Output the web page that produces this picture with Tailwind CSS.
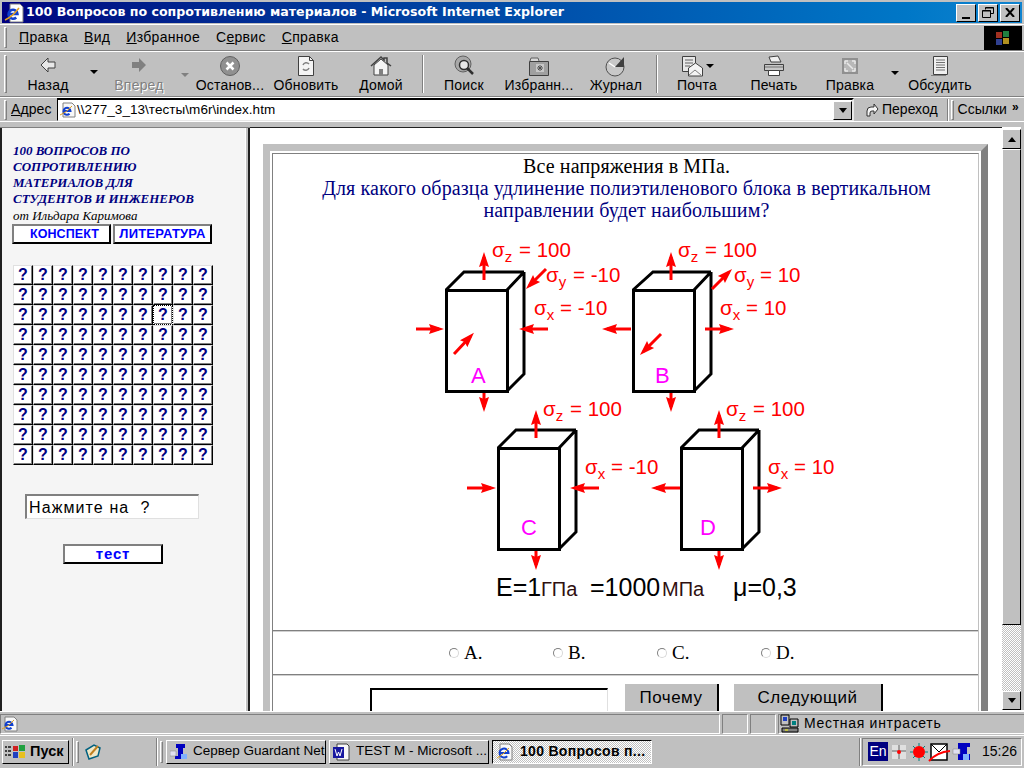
<!DOCTYPE html>
<html lang="ru">
<head>
<meta charset="UTF-8">
<title>100 Вопросов по сопротивлению материалов</title>
<script src="https://cdn.jsdelivr.net/npm/@tailwindcss/browser@4"></script>
</head>
<body class="w-[1024px] h-[768px] overflow-hidden bg-[#c0c0c0] font-['Liberation_Sans',sans-serif] text-[14px] text-black">

<!-- title bar -->
<div class="h-[24px] pt-[2px] pb-[1px] px-[2px] bg-[#c0c0c0]">
  <div class="h-[21px] flex items-center bg-gradient-to-r from-[#000080] to-[#1084d0] pl-[2px] pr-[2px]">
    <svg width="20" height="20" viewBox="0 0 20 20" class="shrink-0"><path d="M6 1h10l3 3v15H6z" fill="#fff" stroke="#808080"/><path d="M4.500 11h9a4.500 4.500 0 1 0-1.300 3.500" fill="none" stroke="#1040d0" stroke-width="2.500"/><path d="M1 17Q8 14 15 5" fill="none" stroke="#e0a020" stroke-width="1.500"/></svg>
    <span class="ml-[2px] font-['DejaVu_Sans',sans-serif] font-bold text-[12.6px] text-white whitespace-nowrap">100 Вопросов по сопротивлению материалов - Microsoft Internet Explorer</span>
    <div class="ml-auto flex">
      <span class="w-[20px] h-[18px] bg-[#c0c0c0] border-t border-l border-white border-r border-b border-r-black border-b-black flex items-end justify-center pb-[2px]"><span class="w-[8px] h-[2px] bg-black"></span></span>
      <span class="ml-[2px] w-[20px] h-[18px] bg-[#c0c0c0] border border-white border-r-black border-b-black flex items-center justify-center"><svg width="12" height="11" viewBox="0 0 12 11"><path d="M3.500 2.500V.5h8v6h-3M.5 3.500h8v7h-8zM.5 4h8M3.500 1h8" fill="none" stroke="#000"/></svg></span>
      <span class="ml-[2px] w-[20px] h-[18px] bg-[#c0c0c0] border border-white border-r-black border-b-black flex items-center justify-center"><svg width="10" height="9" viewBox="0 0 10 9"><path d="M1 0l8 9M9 0L1 9" stroke="#000" stroke-width="2"/></svg></span>
    </div>
  </div>
</div>

<!-- menu bar -->
<div class="h-[27px] flex items-center border-t border-b border-t-white border-b-[#808080] relative">
  <span class="ml-[4px] w-[3px] h-[21px] border border-white border-r-[#808080] border-b-[#808080]"></span>
  <div class="ml-[12px] flex gap-[16px] tracking-[0.3px]">
    <span><u>П</u>равка</span><span><u>В</u>ид</span><span><u>И</u>збранное</span><span>С<u>е</u>рвис</span><span><u>С</u>правка</span>
  </div>
  <div class="absolute right-[2px] top-[1px] w-[38px] h-[24px] bg-black flex items-center justify-center">
    <svg width="16" height="16" viewBox="0 0 16 16"><path d="M1 2h6v6H1z" fill="#a03020"/><path d="M8 1h6v6H8z" fill="#208040"/><path d="M1 9h6v6H1z" fill="#304090"/><path d="M8 8h6v6H8z" fill="#b09020"/></svg>
  </div>
</div>

<!-- toolbar -->
<div class="h-[46px] flex items-center border-t border-b border-t-white border-b-[#808080] tracking-[0.2px]">
  <span class="ml-[4px] mr-[6px] w-[3px] h-[38px] border border-white border-r-[#808080] border-b-[#808080] shrink-0"></span>
  <div class="w-[68px] flex flex-col items-center relative left-[1px]">
    <svg width="20" height="20" viewBox="0 0 20 20"><path d="M3 10l7-7v4h7v6h-7v4z" fill="#e8e8e8" stroke="#404040"/></svg>
    <span class="mt-[2px] leading-[16px] whitespace-nowrap">Назад</span>
  </div>
  <div class="w-[26px] flex justify-center -mt-[5px]"><span class="border-x-[4px] border-x-transparent border-t-[4px] border-t-black"></span></div>
  <div class="w-[64px] flex flex-col items-center text-[#808080]">
    <svg width="20" height="20" viewBox="0 0 20 20"><path d="M17 10l-7-7v4H3v6h7v4z" fill="#808080"/></svg>
    <span class="mt-[2px] leading-[16px] whitespace-nowrap [text-shadow:1px_1px_0_#fff]">Вперед</span>
  </div>
  <div class="w-0 relative left-[10px]"><span class="absolute -top-[1px] border-x-[4px] border-x-transparent border-t-[4px] border-t-[#808080]"></span></div>
  <div class="w-[25px]"></div>
  <div class="w-[68px] flex flex-col items-center">
    <svg width="22" height="22" viewBox="0 0 22 22"><circle cx="11" cy="11" r="9.500" fill="#909090" stroke="#606060"/><path d="M7.500 7.500l7 7M14.500 7.500l-7 7" stroke="#fff" stroke-width="2.500"/></svg>
    <span class="leading-[16px] whitespace-nowrap">Останов...</span>
  </div>
  <div class="w-[84px] flex flex-col items-center">
    <svg width="20" height="22" viewBox="0 0 20 22"><path d="M2.500 1.500h11l4 4v15h-15z" fill="#f4f4f4" stroke="#404040"/><path d="M13.500 1.500v4h4" fill="none" stroke="#404040"/><path d="M7 10a3.500 3.500 0 0 1 6-1M13 13a3.500 3.500 0 0 1-6 1" fill="none" stroke="#808080" stroke-width="1.500"/></svg>
    <span class="leading-[16px] whitespace-nowrap">Обновить</span>
  </div>
  <div class="w-[66px] flex flex-col items-center">
    <svg width="22" height="22" viewBox="0 0 22 22"><path d="M1 11L11 2l3 3V3h3v5l4 3" fill="none" stroke="#404040" stroke-width="1.500"/><path d="M4 10v10h14V10l-7-6z" fill="#f4f4f4" stroke="#404040"/><path d="M9 14h4v6H9z" fill="#808080"/></svg>
    <span class="leading-[16px] whitespace-nowrap">Домой</span>
  </div>
  <div class="w-[18px] flex justify-center"><span class="w-[2px] h-[38px] border-l border-l-[#808080] border-r border-r-white"></span></div>
  <div class="w-[64px] flex flex-col items-center">
    <svg width="22" height="22" viewBox="0 0 22 22"><circle cx="10" cy="9" r="8" fill="#a8a8a8" stroke="#606060"/><circle cx="11" cy="10" r="4.500" fill="#e8e8e8" stroke="#303030" stroke-width="1.500"/><path d="M14 13l6 6" stroke="#303030" stroke-width="2.500"/></svg>
    <span class="leading-[16px] whitespace-nowrap">Поиск</span>
  </div>
  <div class="w-[86px] flex flex-col items-center">
    <svg width="22" height="22" viewBox="0 0 22 22"><path d="M1.500 6.500h19v14h-19z" fill="#a0a0a0" stroke="#404040"/><path d="M2 6l1-3h7l1 3" fill="#d8d8d8" stroke="#606060"/><path d="M8 9h8v8H8z" fill="#c8c8c8"/><path d="M12 10v6M9 13h6M10 11l4 4M14 11l-4 4" stroke="#505050"/></svg>
    <span class="leading-[16px] whitespace-nowrap">Избранн...</span>
  </div>
  <div class="w-[68px] flex flex-col items-center">
    <svg width="22" height="22" viewBox="0 0 22 22"><circle cx="10" cy="12" r="9" fill="#c8c8c8" stroke="#505050"/><path d="M10 12L19 2v10z" fill="#404040"/><path d="M10 12L4 8" stroke="#fff" stroke-width="1.500"/></svg>
    <span class="leading-[16px] whitespace-nowrap">Журнал</span>
  </div>
  <div class="w-[14px] flex justify-center"><span class="w-[2px] h-[38px] border-l border-l-[#808080] border-r border-r-white"></span></div>
  <div class="w-[66px] flex flex-col items-center relative">
    <svg width="22" height="22" viewBox="0 0 22 22" class="-ml-[10px]"><path d="M1.500 1.500h13v15h-13z" fill="#e8e8e8" stroke="#404040"/><path d="M4 5h8M4 8h8M4 11h5" stroke="#606060"/><path d="M7.500 13l7-5 7 5v8h-14z" fill="#f4f4f4" stroke="#404040"/><path d="M8 20l6-5 6 5" fill="none" stroke="#808080"/></svg>
    <span class="absolute left-[42px] top-[9px] border-x-[4px] border-x-transparent border-t-[4px] border-t-black"></span>
    <span class="leading-[16px] whitespace-nowrap">Почта</span>
  </div>
  <div class="w-[88px] flex flex-col items-center">
    <svg width="22" height="22" viewBox="0 0 22 22"><path d="M6 2l9-1 3 6H8z" fill="#f0f0f0" stroke="#404040"/><path d="M1.500 9.500h19v6h-19z" fill="#c8c8c8" stroke="#404040"/><path d="M5.500 15.500h11v5h-11z" fill="#fff" stroke="#404040"/><path d="M2 12h18" stroke="#707070"/></svg>
    <span class="leading-[16px] whitespace-nowrap">Печать</span>
  </div>
  <div class="w-[64px] flex flex-col items-center">
    <svg width="22" height="22" viewBox="0 0 22 22"><path d="M3 3h16v16H3z" fill="#909090"/><path d="M5 5h12v12H5z" fill="#b8b8b8"/><path d="M6 6h3M6 6v3M16 6h-3M16 6v3M6 16h3M6 16v-3M16 16h-3M16 16v-3M8 8l6 6" stroke="#e8e8e8" stroke-width="1.500"/></svg>
    <span class="leading-[16px] whitespace-nowrap">Правка</span>
  </div>
  <div class="w-[26px] flex justify-center -mt-[3px]"><span class="border-x-[4px] border-x-transparent border-t-[4px] border-t-black"></span></div>
  <div class="w-[64px] flex flex-col items-center">
    <svg width="20" height="22" viewBox="0 0 20 22"><path d="M3.500 1.500h14v18h-14z" fill="#f0f0f0" stroke="#404040"/><path d="M6 5h9M6 7.500h9M6 10h9M6 12.500h9M6 15h9" stroke="#707070"/><path d="M1 20.500h15" stroke="#808080"/></svg>
    <span class="leading-[16px] whitespace-nowrap">Обсудить</span>
  </div>
</div>

<!-- address bar -->
<div class="h-[24px] flex items-center border-t border-t-white">
  <span class="ml-[4px] w-[3px] h-[20px] border border-white border-r-[#808080] border-b-[#808080] shrink-0"></span>
  <span class="ml-[4px] w-[46px] tracking-[0.1px]"><u>А</u>дрес</span>
  <div class="w-[797px] h-[23px] bg-white border-t-2 border-l border-r-2 border-b border-t-black border-l-black border-r-[#e8e8e8] border-b-[#e8e8e8] flex items-center">
    <svg width="16" height="16" viewBox="0 0 16 16" class="ml-[2px] shrink-0"><path d="M3 1h9l3 3v11H3z" fill="#f8f8f8" stroke="#808080"/><path d="M3.500 9h7a3.500 3.500 0 1 0-1 2.800" fill="none" stroke="#1040d0" stroke-width="2"/><path d="M0 13Q6 11 12 4" fill="none" stroke="#e0a020"/></svg>
    <span class="ml-[1px] text-[13.5px] tracking-[0.05px] whitespace-nowrap">\\277_3_13\тесты\m6r\index.htm</span>
    <span class="ml-auto w-[19px] h-[19px] bg-[#c0c0c0] border border-white border-r-black border-b-black flex items-center justify-center"><span class="border-x-[4.500px] border-x-transparent border-t-[5px] border-t-black"></span></span>
  </div>
  <svg width="14" height="16" viewBox="0 0 14 16" class="ml-[11px] shrink-0"><path d="M2 14V9a4 4 0 0 1 4-4h3V2l4 5-4 5V9H7a2 2 0 0 0-2 2v3z" fill="#f4f4f4" stroke="#303030"/></svg>
  <span class="ml-[3px]">Переход</span>
  <span class="ml-[9px] w-[2px] h-[22px] border-l border-l-[#808080] border-r border-r-white"></span>
  <span class="ml-[2px] w-[3px] h-[20px] border border-white border-r-[#808080] border-b-[#808080]"></span>
  <span class="ml-[4px]">Ссылки</span>
  <span class="ml-[5px] -mt-[6px] text-[12px] font-bold">»</span>
</div>

<!-- content -->
<div class="h-[590px] flex border-t border-t-white pt-[5px]">
  <div class="w-[250px] h-full flex border-t border-t-[#808080]">
    <!-- left frame -->
    <div class="w-[245px] h-full bg-[#f5f5f5] border-l-2 border-l-[#202020] pl-[11px] pt-[15px] relative font-['Liberation_Serif',serif]">
      <div class="text-[13px] leading-[16px] font-bold italic text-[#000080]">100 ВОПРОСОВ ПО<br>СОПРОТИВЛЕНИЮ<br>МАТЕРИАЛОВ ДЛЯ<br>СТУДЕНТОВ И ИНЖЕНЕРОВ</div>
      <div class="text-[13px] leading-[16px] italic mt-[1px]">от Ильдара Каримова</div>
      <div class="flex gap-[2px] -ml-[1px] font-['Liberation_Sans',sans-serif] text-[13px] tracking-[0.2px] font-bold text-[#0000ff]">
        <span class="w-[99px] h-[20px] bg-white border-2 border-[#808080] border-r-black border-b-black flex items-center justify-center pl-[6px] text-[12.5px] tracking-[0.1px]">КОНСПЕКТ</span>
        <span class="w-[99px] h-[20px] bg-white border-2 border-[#808080] border-r-black border-b-black flex items-center justify-center">ЛИТЕРАТУРА</span>
      </div>
      <div id="quizGrid" class="mt-[21px] grid grid-cols-[repeat(10,20px)] auto-rows-[20px] font-['Liberation_Sans',sans-serif]"></div>
      <div class="mt-[29px] ml-[12px] w-[174px] h-[25px] bg-white border-t-2 border-l-2 border-t-[#808080] border-l-[#808080] border-r border-b border-r-[#e0e0e0] border-b-[#e0e0e0] pl-[2px] pt-[1px] flex items-center font-['Liberation_Sans',sans-serif] text-[16px] tracking-[1.1px] whitespace-pre">Нажмите на  ?</div>
      <div class="mt-[25px] ml-[50px] w-[100px] h-[20px] bg-white border-2 border-[#808080] border-r-black border-b-black flex items-center justify-center font-['Liberation_Sans',sans-serif] text-[15px] tracking-[0.8px] font-bold text-[#0000ff]">тест</div>
    </div>
    <div class="w-[3px] h-full bg-[#c0c0c0] border-l border-l-white"></div>
    <div class="w-[2px] h-full bg-[#202020]"></div>
  </div>

  <!-- right frame -->
  <div class="w-[752px] h-full bg-white border-t border-t-[#202020] pl-[13px] pt-[16px] overflow-hidden">
    <div class="w-[725px] border-[7px] border-[#c0c0c0] border-r-[#808080] border-b-0 bg-white">
      <div class="border-[2px] border-white border-b-0">
        <div class="border-t border-l border-r border-[#808080] border-r-[#c0c0c0] h-[570px] font-['Liberation_Serif',serif] relative">
          <div class="text-center text-[20px] tracking-[0.14px] leading-[22px] pt-[1px] pl-[2px] text-[#000080]">
            <div class="text-black">Все напряжения в МПа.</div>
            <div>Для какого образца удлинение полиэтиленового блока в вертикальном<br>направлении будет наибольшим?</div>
          </div>
          <!-- diagram: 1:1 with page, origin shifted by (273,154) -->
          <svg class="absolute left-0 top-0 font-['Liberation_Sans',sans-serif]" width="705" height="480" viewBox="273 154 705 480">
            <defs>
              <marker id="head" markerUnits="userSpaceOnUse" markerWidth="16" markerHeight="14" refX="10" refY="7" orient="auto"><path d="M0 2L15 7 0 12 2 7z" fill="#f00"/></marker>
            </defs>
            <g fill="none" stroke="#000" stroke-width="3" shape-rendering="crispEdges">
              <path d="M446 290h61v101h-61z"/><path d="M446 290l18-18h60M524 272v102l-17 17M507 290l17-18" shape-rendering="auto"/>
              <path d="M633 290h61v101h-61z"/><path d="M633 290l20-18h58M711 272v102l-17 17M694 290l17-18" shape-rendering="auto"/>
              <path d="M498 448h61v101h-61z"/><path d="M498 448l18-18h60M576 430v102l-17 17M559 448l17-18" shape-rendering="auto"/>
              <path d="M681 448h61v101h-61z"/><path d="M681 448l18-18h60M759 430v102l-17 17M742 448l17-18" shape-rendering="auto"/>
            </g>
            <g stroke="#f00" stroke-width="3" fill="none">
              <path marker-end="url(#head)" d="M484 280V257"/><path marker-end="url(#head)" d="M546 269L529.500 285.500"/><path marker-end="url(#head)" d="M416 329H439"/><path marker-end="url(#head)" d="M548 329H524"/><path marker-end="url(#head)" d="M454 354L470.500 336.500"/><path marker-end="url(#head)" d="M484 393V407"/>
              <path marker-end="url(#head)" d="M671 280V257"/><path marker-end="url(#head)" d="M712 289L728.500 272.500"/><path marker-end="url(#head)" d="M631 329H607"/><path marker-end="url(#head)" d="M705 329H729"/><path marker-end="url(#head)" d="M661 334L643.500 351.500"/><path marker-end="url(#head)" d="M671 393V407"/>
              <path marker-end="url(#head)" d="M536 438V415"/><path marker-end="url(#head)" d="M467 488H491"/><path marker-end="url(#head)" d="M599 488H575"/><path marker-end="url(#head)" d="M536 551V565"/>
              <path marker-end="url(#head)" d="M719 438V415"/><path marker-end="url(#head)" d="M680 488H656"/><path marker-end="url(#head)" d="M753 488H777"/><path marker-end="url(#head)" d="M719 551V565"/>
            </g>
            <g fill="#f00" font-size="20.500">
              <text x="492" y="257">σ<tspan dy="5" font-size="15">z</tspan><tspan x="519" dy="-5">= 100</tspan></text>
              <text x="546" y="282">σ<tspan dy="5" font-size="15">y</tspan><tspan x="573" dy="-5">= -10</tspan></text>
              <text x="534" y="315">σ<tspan dy="5" font-size="15">x</tspan><tspan x="560" dy="-5">= -10</tspan></text>
              <text x="678" y="257">σ<tspan dy="5" font-size="15">z</tspan><tspan x="705" dy="-5">= 100</tspan></text>
              <text x="734" y="282">σ<tspan dy="5" font-size="15">y</tspan><tspan x="760" dy="-5">= 10</tspan></text>
              <text x="720" y="315">σ<tspan dy="5" font-size="15">x</tspan><tspan x="746" dy="-5">= 10</tspan></text>
              <text x="543" y="416">σ<tspan dy="5" font-size="15">z</tspan><tspan x="570" dy="-5">= 100</tspan></text>
              <text x="585" y="474">σ<tspan dy="5" font-size="15">x</tspan><tspan x="611" dy="-5">= -10</tspan></text>
              <text x="726" y="416">σ<tspan dy="5" font-size="15">z</tspan><tspan x="753" dy="-5">= 100</tspan></text>
              <text x="768" y="474">σ<tspan dy="5" font-size="15">x</tspan><tspan x="794" dy="-5">= 10</tspan></text>
            </g>
            <g fill="#f0f" font-size="22">
              <text x="471" y="383">A</text><text x="655" y="383">B</text><text x="521" y="535">C</text><text x="700" y="535">D</text>
            </g>
            <g font-size="25" fill="#000">
              <text x="496" y="596">E=1</text><text x="541" y="596" font-size="20" fill="#301010">ГПа</text>
              <text x="590" y="596">=1000</text><text x="662" y="596" font-size="20" fill="#301010">МПа</text>
              <text x="733" y="596">μ=0,3</text>
            </g>
          </svg>
          <div class="absolute left-0 top-[476px] w-full h-[2px] bg-[#808080] border-b border-b-[#d0d0d0]"></div>
          <div class="absolute left-[176px] top-[489px] flex text-[19px] leading-[20px]">
            <label class="w-[104px] flex items-center"><span class="w-[10px] h-[10px] rounded-full bg-white border border-[#808080] border-r-[#d8d8d8] border-b-[#d8d8d8] mr-[5px]"></span>A.</label>
            <label class="w-[104px] flex items-center"><span class="w-[10px] h-[10px] rounded-full bg-white border border-[#808080] border-r-[#d8d8d8] border-b-[#d8d8d8] mr-[5px]"></span>B.</label>
            <label class="w-[104px] flex items-center"><span class="w-[10px] h-[10px] rounded-full bg-white border border-[#808080] border-r-[#d8d8d8] border-b-[#d8d8d8] mr-[5px]"></span>C.</label>
            <label class="flex items-center"><span class="w-[10px] h-[10px] rounded-full bg-white border border-[#808080] border-r-[#d8d8d8] border-b-[#d8d8d8] mr-[5px]"></span>D.</label>
          </div>
          <div class="absolute left-0 top-[520px] w-full h-[2px] bg-[#808080] border-b border-b-[#d0d0d0]"></div>
          <div class="absolute left-[97px] top-[530px] flex items-start font-['Liberation_Sans',sans-serif] text-[17px] tracking-[0.5px]">
            <span class="mt-[4px] w-[238px] h-[30px] bg-white border-t-2 border-l-2 border-t-black border-l-black border-r border-r-[#e0e0e0]"></span>
            <span class="ml-[17px] w-[94px] h-[34px] bg-[#c0c0c0] border-r-2 border-r-black pt-[1px] text-center">Почему</span>
            <span class="ml-[15px] w-[149px] h-[34px] bg-[#c0c0c0] border-r-2 border-r-black pt-[1px] text-center">Следующий</span>
          </div>
        </div>
      </div>
    </div>
  </div>

  <!-- scrollbar -->
  <div class="w-[19px] h-full bg-white pt-[2px]">
    <div class="h-[581px] flex flex-col bg-[repeating-conic-gradient(#ffffff_0_25%,#c0c0c0_0_50%)] bg-[length:2px_2px]">
      <span class="h-[20px] shrink-0 bg-[#c0c0c0] border border-white border-r-black border-b-black flex items-center justify-center"><span class="border-x-[4.500px] border-x-transparent border-b-[5px] border-b-black"></span></span>
      <span class="h-[476px] shrink-0 bg-[#c0c0c0] border border-white border-r-black border-b-black"></span>
      <span class="mt-auto h-[19px] shrink-0 bg-[#c0c0c0] border border-white border-r-black border-b-black flex items-center justify-center"><span class="border-x-[4.500px] border-x-transparent border-t-[5px] border-t-black"></span></span>
    </div>
  </div>
</div>

<!-- status bar -->
<div class="h-[25px] flex items-center border-t-2 border-t-white -mt-[1px] tracking-[0.7px]">
  <div class="w-[720px] h-[20px] border-t border-l border-t-[#808080] border-l-[#808080] flex items-center pl-[1px] border-b border-r border-b-white border-r-white">
    <svg width="16" height="16" viewBox="0 0 16 16"><path d="M3 1h9l3 3v11H3z" fill="#f8f8f8" stroke="#808080"/><path d="M3.500 9h7a3.500 3.500 0 1 0-1 2.800" fill="none" stroke="#1040d0" stroke-width="2"/><path d="M0 13Q6 11 12 4" fill="none" stroke="#e0a020"/></svg>
  </div>
  <div class="ml-[2px] w-[26px] h-[20px] border border-[#808080] border-r-white border-b-white"></div>
  <div class="ml-[2px] w-[26px] h-[20px] border border-[#808080] border-r-white border-b-white"></div>
  <div class="ml-[2px] flex-1 h-[20px] border border-[#808080] border-r-0 border-b-white flex items-center pl-[1px]">
    <svg width="20" height="20" viewBox="0 0 20 20" class="shrink-0"><path d="M1 1h8v10H1z" fill="#c0c0c0" stroke="#000"/><path d="M3 3h4v4H3z" fill="#2040c0"/><path d="M10 5h8v8h-8z" fill="#c0c0c0" stroke="#000"/><path d="M12 7h4v4h-4z" fill="#008080"/><path d="M2 14h16v4H2z" fill="#808080" stroke="#000"/><path d="M5 16h3" stroke="#ff0"/></svg>
    <span class="ml-[4px] whitespace-nowrap">Местная интрасеть</span>
  </div>
</div>

<!-- taskbar -->
<div class="h-[32px] border-t border-t-white flex items-center relative">
  <span class="ml-[2px] w-[67px] h-[24px] bg-[#c0c0c0] border border-white border-r-black border-b-black flex items-center pl-[2px] font-bold text-[14.5px] gap-[3px]">
    <svg width="22" height="16" viewBox="0 0 22 16" class="shrink-0"><path d="M0 2h2v2H0zM3 2h3v2H3zM0 6h2v2H0zM3 6h3v2H3zM0 10h2v2H0zM3 10h3v2H3z" fill="#404040"/><path d="M8 2h5v5H8z" fill="#d02020"/><path d="M14 1h6v6h-6z" fill="#20a040"/><path d="M8 8h5v6H8z" fill="#2040c0"/><path d="M14 8h6v6h-6z" fill="#e8c020"/></svg>
    Пуск
  </span>
  <span class="ml-[3px] w-[2px] h-[28px] border-l border-l-[#808080] border-r border-r-white"></span>
  <span class="ml-[2px] w-[3px] h-[22px] border border-white border-r-[#808080] border-b-[#808080]"></span>
  <svg width="16" height="16" viewBox="0 0 16 16" class="ml-[6px] shrink-0"><path d="M1 6l8-5 6 3-2 8-9 3z" fill="#f0e8c8" stroke="#006080" stroke-width="1.500"/><path d="M5 11l8-9" stroke="#c08020" stroke-width="2"/></svg>
  <span class="ml-[55px] w-[2px] h-[28px] border-l border-l-[#808080] border-r border-r-white"></span>
  <span class="ml-[2px] w-[3px] h-[22px] border border-white border-r-[#808080] border-b-[#808080]"></span>
  <span class="ml-[3px] w-[160px] h-[24px] bg-[#c0c0c0] border border-white border-r-black border-b-black flex items-center pl-[3px] overflow-hidden whitespace-nowrap text-[13.5px]">
    <svg width="18" height="18" viewBox="0 0 18 18" class="shrink-0 mr-[5px]"><path d="M6 1h9v4h-2v6h2v5H5v-3h3V5H6z" fill="#0000c0"/><path d="M0 8h6v5H0z" fill="#e0e0f0" stroke="#808080" stroke-width=".5"/><path d="M11 11h6v5h-6z" fill="#80b0ff"/></svg>
    Сервер Guardant Net
  </span>
  <span class="ml-[3px] w-[160px] h-[24px] bg-[#c0c0c0] border border-white border-r-black border-b-black flex items-center pl-[3px] overflow-hidden whitespace-nowrap text-[13.5px]">
    <svg width="18" height="18" viewBox="0 0 18 18" class="shrink-0 mr-[5px]"><path d="M4 1h10l2 2v14H4z" fill="#f8f8f8" stroke="#404040"/><path d="M0 4h11v11H0z" fill="#1818a0"/><path d="M2 6l2 7 1.500-4 1.500 4 2-7" fill="none" stroke="#fff"/></svg>
    TEST M - Microsoft ...
  </span>
  <span class="ml-[3px] w-[160px] h-[24px] border border-black border-r-white border-b-white flex items-center pl-[3px] overflow-hidden whitespace-nowrap font-bold tracking-[0.3px] bg-[repeating-conic-gradient(#ffffff_0_25%,#c0c0c0_0_50%)] bg-[length:2px_2px]">
    <svg width="18" height="18" viewBox="0 0 18 18" class="shrink-0 mr-[6px]"><path d="M4 1h9l3 3v13H4z" fill="#f8f8f8" stroke="#808080"/><path d="M3.500 10h9a4.500 4.500 0 1 0-1.300 3.200" fill="none" stroke="#1040d0" stroke-width="2"/><path d="M1 15Q7 12 13 5" fill="none" stroke="#e0a020"/></svg>
    100 Вопросов п...
  </span>
  <span class="ml-[207px] w-[2px] h-[28px] border-l border-l-[#808080] border-r border-r-white"></span>
  <div class="ml-[1px] w-[160px] h-[28px] border border-[#808080] border-r-white border-b-white flex items-center pl-[5px]">
    <span class="w-[20px] h-[19px] bg-[#000080] text-white flex items-center justify-center shrink-0">En</span>
    <svg width="84" height="20" viewBox="0 0 84 20" class="ml-[1px] shrink-0">
      <path d="M3 3h14v14H3z" fill="#e0e0e0"/><path d="M3 9h14M10 3v14" stroke="#a0a0a0" stroke-width="2"/><circle cx="10" cy="10" r="2" fill="#f00"/>
      <circle cx="30" cy="10" r="6" fill="#f00"/><path d="M30 1v3M30 16v3M21 10h3M36 10h3M24 4l2 2M34 14l2 2M36 4l-2 2M26 14l-2 2" stroke="#008080"/>
      <path d="M42 2h16v16H42z" fill="#fff" stroke="#000" stroke-width="1.500"/><path d="M42 2l8 8 8-8" fill="none" stroke="#000"/><path d="M40 19Q48 10 61 9" fill="none" stroke="#f00" stroke-width="2"/>
      <path d="M69 1h12v4h-3v7h3v6H69z" fill="#0000c0"/><path d="M64 7h7v5h-7z" fill="#e0e0f0" stroke="#808080" stroke-width=".5"/><path d="M74 12h6v6h-6z" fill="#80b0ff"/>
    </svg>
    <span class="ml-[9px] whitespace-nowrap">15:26</span>
  </div>
</div>

<script>
  // 10x10 block of question buttons
  const quizGrid = document.getElementById("quizGrid");
  for (let i = 0; i < 100; i++) {
    const cell = document.createElement("span");
    cell.textContent = "?";
    cell.className = i === 27
      ? "w-[20px] h-[20px] flex items-center justify-center bg-white text-[#000080] text-[16px] font-bold border border-dotted border-black shadow-[inset_-1px_-1px_0_#808080]"
      : "w-[20px] h-[20px] flex items-center justify-center bg-white text-[#000080] text-[16px] font-bold border border-[#e0e0e0] border-r-black border-b-black shadow-[inset_-1px_-1px_0_#808080]";
    quizGrid.appendChild(cell);
  }
</script>
</body>
</html>
